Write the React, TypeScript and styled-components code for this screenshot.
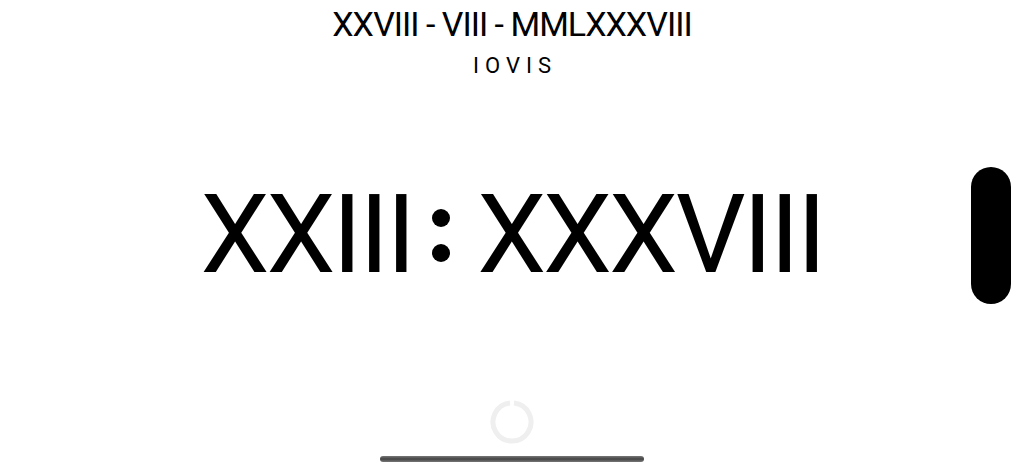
import React from "react";
import styled, { createGlobalStyle } from "styled-components";

const Global = createGlobalStyle`
  html, body {
    margin: 0;
    padding: 0;
    background: #ffffff;
    font-family: Roboto, "Liberation Sans", sans-serif;
    color: #000;
  }
`;

const Screen = styled.div`
  position: relative;
  width: 1024px;
  height: 472px;
  overflow: hidden;
  display: flex;
  flex-direction: column;
  align-items: center;
`;

const DateLine = styled.div`
  margin-top: 5px;
  font-size: 34px;
  font-weight: 400;
  line-height: 38px;
  letter-spacing: -1px;
`;

const DayLine = styled.div`
  margin-top: 10px;
  font-size: 22px;
  line-height: 26px;
  letter-spacing: 6px;
  padding-left: 6px;
`;

const Clock = styled.div`
  margin-top: 106px;
  display: flex;
  align-items: center;
  font-size: 110px;
  line-height: 100px;
  font-weight: 400;
  letter-spacing: -3px;
`;

const Colon = styled.div`
  display: flex;
  flex-direction: column;
  gap: 17px;
  margin: 0 27px 0 19px;
`;

const Dot = styled.span`
  width: 18px;
  height: 18px;
  border-radius: 50%;
  background: #000;
`;

const Handle = styled.div`
  position: absolute;
  right: 13px;
  top: 167px;
  width: 40px;
  height: 137px;
  border-radius: 20px;
  background: #000;
`;

const Spinner = styled.svg`
  position: absolute;
  left: 489px;
  top: 399px;
`;

const HomeBar = styled.div`
  position: absolute;
  left: 380px;
  top: 456px;
  width: 264px;
  height: 6px;
  border-radius: 3px;
  background: linear-gradient(#777, #444 50%, #777);
`;

export default function App() {
  return (
    <>
      <Global />
      <Screen>
        <DateLine>XXVIII - VIII - MMLXXXVIII</DateLine>
        <DayLine>IOVIS</DayLine>
        <Clock>
          <span>XXIII</span>
          <Colon>
            <Dot />
            <Dot />
          </Colon>
          <span>XXXVIII</span>
        </Clock>
        <Handle />
        <Spinner width="46" height="46" viewBox="0 0 46 46">
          <path
            d="M 21 4.1 A 19 19 0 1 0 25 4.1"
            fill="none"
            stroke="#efefef"
            strokeWidth="5"
          />
        </Spinner>
        <HomeBar />
      </Screen>
    </>
  );
}
